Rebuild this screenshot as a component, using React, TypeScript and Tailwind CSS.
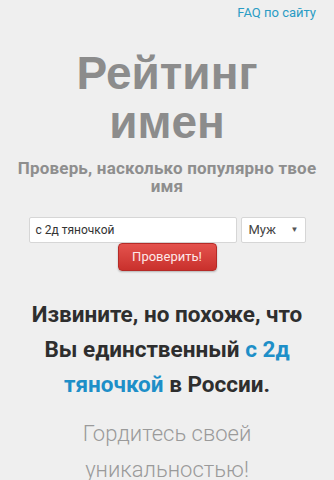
import React from "react";

export default function App() {
  return (
    <div className="w-[334px] h-[480px] overflow-hidden bg-[#efefef] font-['Roboto',sans-serif]">
      <div className="flex justify-end pr-[18px] pt-[4px]">
        <a className="text-[13px] leading-[17px] text-[#2a9cc4]">FAQ по сайту</a>
      </div>
      <h1 className="mt-[28px] text-center font-['Liberation_Sans',sans-serif] font-bold text-[46px] leading-[49px] text-[#8c8c8c]">
        Рейтинг
        <br />
        имен
      </h1>
      <p className="mt-[12px] px-[12px] text-center font-bold text-[17px] leading-[18px] tracking-[0.2px] text-[#8e8e8e]">
        Проверь, насколько популярно твое имя
      </p>
      <div className="mt-[22px] flex justify-center gap-[4px] px-[28px]">
        <div className="flex h-[26px] w-[208px] items-center rounded-[2px] border border-[#d6d6d6] bg-white pl-[6px] text-[12px] text-[#333]">
          с 2д тяночкой
        </div>
        <div className="flex h-[26px] w-[65px] items-center justify-between rounded-[2px] border border-[#d6d6d6] bg-white pl-[7px] pr-[6px] text-[13px] text-[#444]">
          <span>Муж</span>
          <span className="text-[8px] text-[#555]">▼</span>
        </div>
      </div>
      <div className="flex justify-center">
        <button className="h-[28px] w-[99px] rounded-[4px] border border-[#b52b27] bg-gradient-to-b from-[#e4524d] to-[#c9302c] text-[13px] text-[#fde8e8] shadow-[0_1px_2px_rgba(0,0,0,0.25)]">
          Проверить!
        </button>
      </div>
      <div className="mt-[26px] px-[28px] text-center font-bold text-[22.5px] leading-[35px] text-[#2e2e2e]">
        Извините, но похоже, что Вы единственный{" "}
        <span className="text-[#1e8fc8]">с 2д тяночкой</span> в России.
      </div>
      <div className="mt-[14px] px-[60px] text-center font-light text-[22px] leading-[36px] text-[#9a9a9a]">
        Гордитесь своей уникальностью!
      </div>
    </div>
  );
}
